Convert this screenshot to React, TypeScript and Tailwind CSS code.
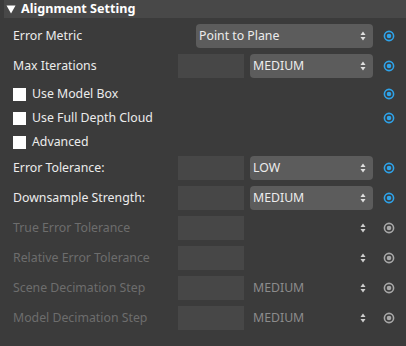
import React from 'react';

const font = { fontFamily: '"Noto Sans", "Open Sans", sans-serif' };

const Arrows: React.FC<{ dim?: boolean }> = ({ dim }) => (
  <svg width="6" height="10" viewBox="0 0 6 10" className="shrink-0">
    <path d="M3 0.5 L5.5 4 L0.5 4 Z" fill={dim ? '#cfcfcf' : '#e0e0e0'} />
    <path d="M3 9.5 L5.5 6 L0.5 6 Z" fill={dim ? '#cfcfcf' : '#e0e0e0'} />
  </svg>
);

const Radio: React.FC<{ dim?: boolean }> = ({ dim }) => (
  <svg width="12" height="12" viewBox="0 0 12 12" className="shrink-0">
    <circle cx="6" cy="6" r="4.6" fill="none" stroke={dim ? '#a8a8a8' : '#2ea3ea'} strokeWidth="1.6" />
    <circle cx="6" cy="6" r="2.3" fill={dim ? '#a8a8a8' : '#2ea3ea'} />
  </svg>
);

const Select: React.FC<{ value?: string; dim?: boolean; className?: string }> = ({ value, dim, className }) => (
  <div
    className={`h-6 flex items-center justify-between pl-[3px] pr-[7px] text-[12.3px] ${
      dim ? 'text-[#8c8c8c]' : 'bg-[#5c5c5c] rounded-[4px] text-[#ececec]'
    } ${className ?? ''}`}
  >
    <span>{value}</span>
    <Arrows dim={dim} />
  </div>
);

const Box = () => <div className="w-[66px] h-6 bg-[#474747] shrink-0" />;

const Row: React.FC<{ label: string; dim?: boolean; value?: string; wide?: boolean; className?: string }> = ({
  label,
  dim,
  value,
  wide,
  className,
}) => (
  <div className={`flex items-center h-6 pl-[13px] ${className ?? ''}`}>
    <div className={`flex-1 text-[12.3px] ${dim ? 'text-[#6d6d6d]' : 'text-[#ececec]'}`}>{label}</div>
    {wide ? (
      <Select value={value} className="w-[177px]" />
    ) : (
      <>
        <Box />
        <Select value={value} dim={dim} className="w-[123px] ml-[6px]" />
      </>
    )}
    <div className="w-[33px] flex justify-center pr-[1px]">
      <Radio dim={dim} />
    </div>
  </div>
);

const Check: React.FC<{ label: string; radio?: boolean }> = ({ label, radio }) => (
  <div className="flex items-center h-6 pl-[13px]">
    <div className="w-[13px] h-[13px] bg-white shrink-0" />
    <div className="flex-1 ml-[6px] text-[12.3px] text-[#ececec]">{label}</div>
    <div className="w-[33px] flex justify-center pr-[1px]">{radio && <Radio />}</div>
  </div>
);

export default function App() {
  return (
    <div className="w-[406px] h-[346px] bg-[#3b3b3b] overflow-hidden" style={font}>
      <div className="ml-1 h-[18px] bg-[#484848] flex items-center">
        <svg width="10" height="9" viewBox="0 0 10 9" className="ml-[2px]">
          <path d="M0.5 0.5 L9.5 0.5 L5 8.5 Z" fill="#ffffff" />
        </svg>
        <span className="ml-[5px] text-[12.6px] font-bold text-white leading-none">Alignment Setting</span>
      </div>
      <div className="flex flex-col pt-[6px]">
        <Row label="Error Metric" value="Point to Plane" wide />
        <Row label="Max Iterations" value="MEDIUM" className="mt-[6px]" />
        <div className="flex flex-col mt-[4px]">
          <Check label="Use Model Box" radio />
          <Check label="Use Full Depth Cloud" radio />
          <Check label="Advanced" />
        </div>
        <div className="flex flex-col gap-[6px] mt-[2px]">
          <Row label="Error Tolerance:" value="LOW" />
          <Row label="Downsample Strength:" value="MEDIUM" />
          <Row label="True Error Tolerance" dim />
          <Row label="Relative Error Tolerance" dim />
          <Row label="Scene Decimation Step" value="MEDIUM" dim />
          <Row label="Model Decimation Step" value="MEDIUM" dim />
        </div>
      </div>
    </div>
  );
}
